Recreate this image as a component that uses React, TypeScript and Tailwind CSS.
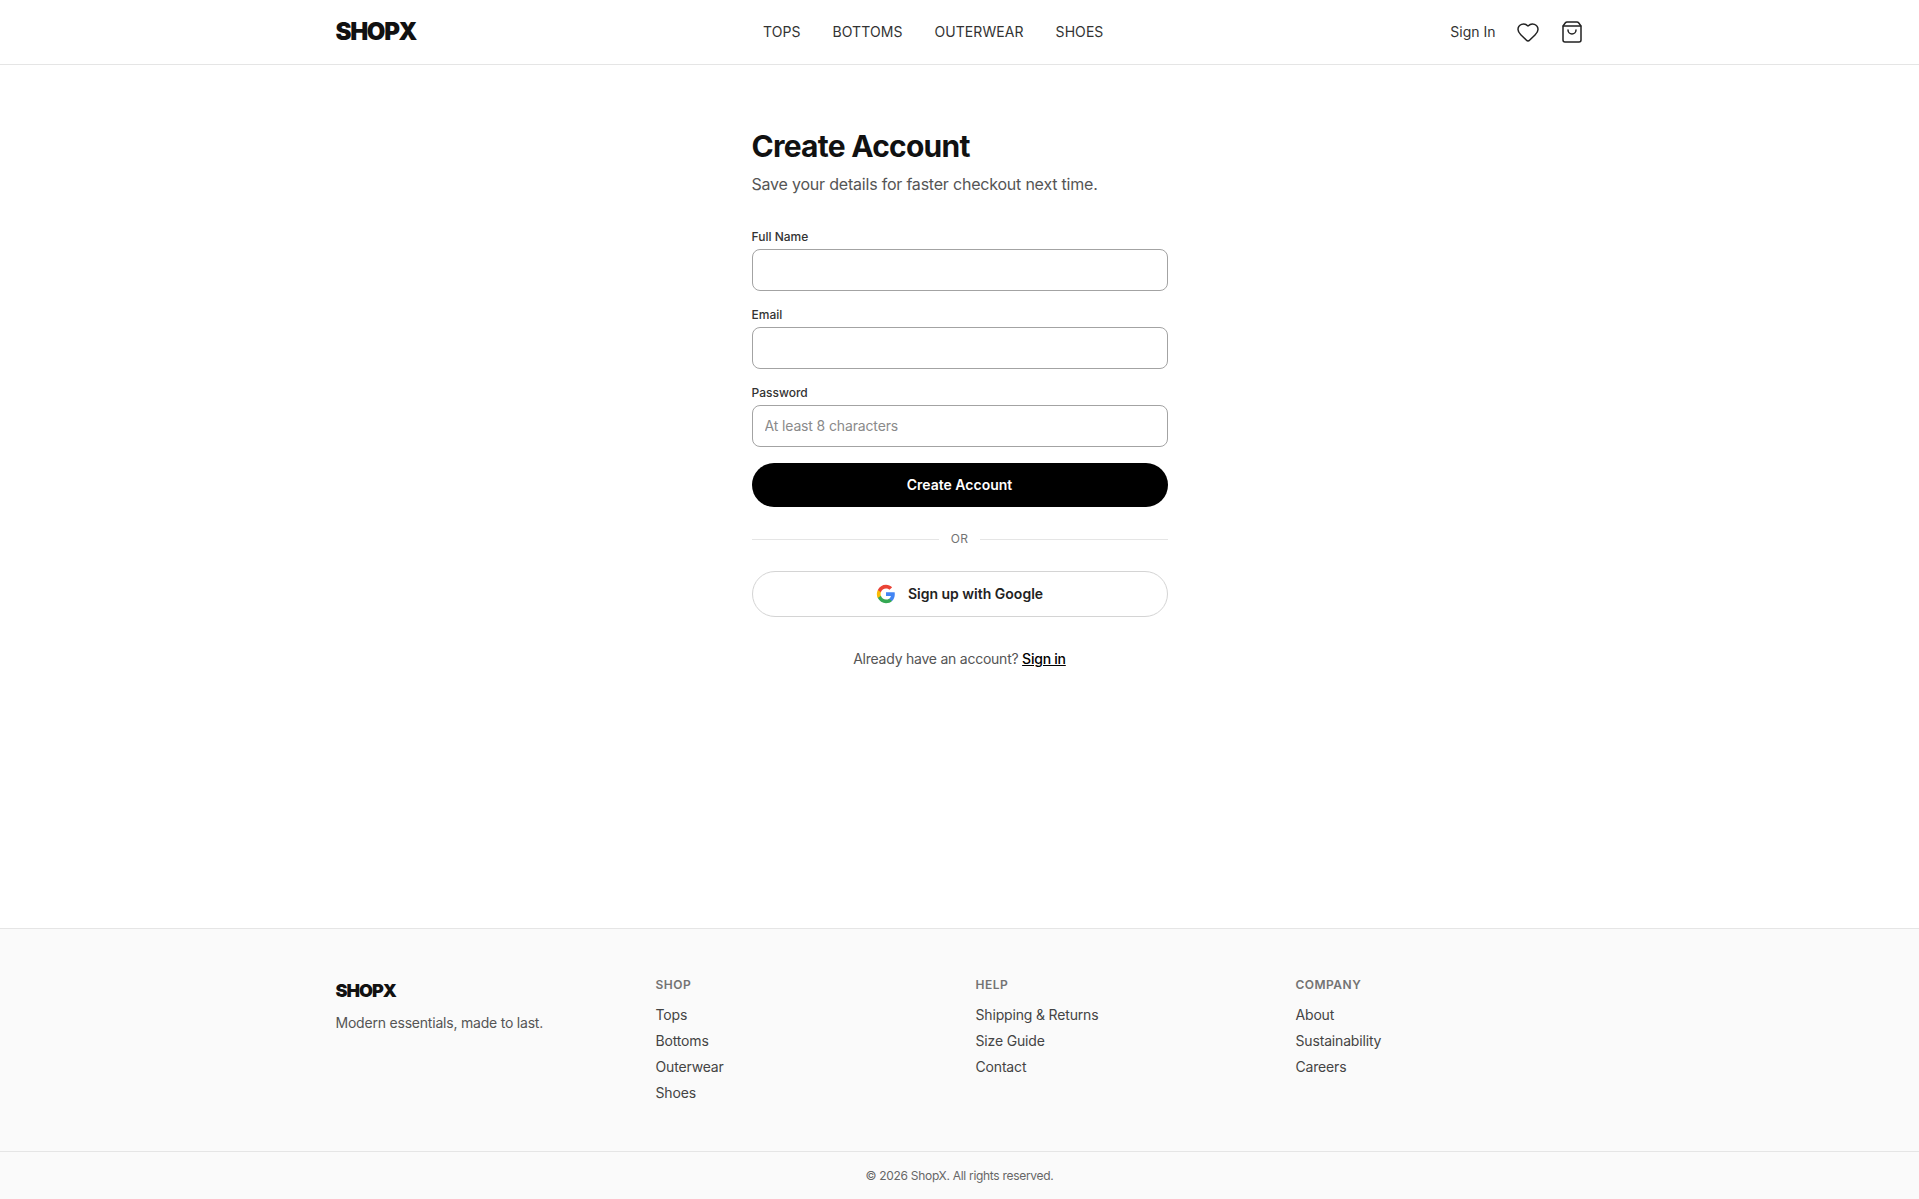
import { Heart, ShoppingBag } from "lucide-react";

const sans = "font-['Inter','Liberation_Sans',sans-serif]";

const NAV = ["TOPS", "BOTTOMS", "OUTERWEAR", "SHOES"];
const COLUMNS = [
  { title: "SHOP", links: ["Tops", "Bottoms", "Outerwear", "Shoes"] },
  { title: "HELP", links: ["Shipping & Returns", "Size Guide", "Contact"] },
  { title: "COMPANY", links: ["About", "Sustainability", "Careers"] },
];

function Field({ label, placeholder }: { label: string; placeholder?: string }) {
  return (
    <div className="mb-4 block">
      <label className="mb-1 block text-xs leading-4 font-medium text-[#333]">{label}</label>
      <input
        placeholder={placeholder}
        className="block h-[42px] w-full rounded-lg border border-[#a3a3a3] bg-white px-3 pb-px text-sm tracking-[-0.01em] text-[#111] outline-none placeholder:text-[#8a8a8a]"
      />
    </div>
  );
}

function GoogleIcon() {
  return (
    <svg width="20" height="20" viewBox="0 0 24 24">
      <path fill="#4285F4" d="M22.56 12.25c0-.78-.07-1.53-.2-2.25H12v4.26h5.92c-.26 1.37-1.04 2.53-2.21 3.31v2.77h3.57c2.08-1.92 3.28-4.74 3.28-8.09z" />
      <path fill="#34A853" d="M12 23c2.97 0 5.46-.98 7.28-2.66l-3.57-2.77c-.98.66-2.23 1.06-3.71 1.06-2.86 0-5.29-1.93-6.16-4.53H2.18v2.84C3.99 20.53 7.7 23 12 23z" />
      <path fill="#FBBC05" d="M5.84 14.09c-.22-.66-.35-1.36-.35-2.09s.13-1.43.35-2.09V7.07H2.18C1.43 8.55 1 10.22 1 12s.43 3.45 1.18 4.93l2.85-2.22.81-.62z" />
      <path fill="#EA4335" d="M12 5.38c1.62 0 3.06.56 4.21 1.64l3.15-3.15C17.45 2.09 14.97 1 12 1 7.7 1 3.99 3.47 2.18 7.07l3.66 2.84c.87-2.6 3.3-4.53 6.16-4.53z" />
    </svg>
  );
}

export default function App() {
  return (
    <div className={`${sans} flex min-h-screen flex-col bg-white text-[#111]`}>
      <header className="border-b border-[#e5e5e5]">
        <div className="mx-auto flex h-16 w-full max-w-7xl items-center justify-between px-4">
          <a className="text-2xl font-black tracking-[-0.055em] text-[#111]">SHOPX</a>
          <nav className="flex gap-8">
            {NAV.map((n) => (
              <a key={n} className="text-sm tracking-[0.005em] text-[#333]">{n}</a>
            ))}
          </nav>
          <div className="flex items-center gap-5">
            <a className="text-sm text-[#333]">Sign In</a>
            <Heart size={24} strokeWidth={1.5} className="text-[#222]" />
            <ShoppingBag size={24} strokeWidth={1.5} className="text-[#222]" />
          </div>
        </div>
      </header>

      <main className="flex-1 px-4 pt-[63px]">
        <div className="mx-auto w-[416px]">
          <h1 className="text-3xl leading-9 font-bold tracking-[-0.025em] text-[#111]">Create Account</h1>
          <p className="mt-2 text-base leading-6 tracking-[-0.013em] text-[#555]">Save your details for faster checkout next time.</p>
          <form className="mt-[33px]">
            <Field label="Full Name" />
            <Field label="Email" />
            <Field label="Password" placeholder="At least 8 characters" />
            <button type="button" className="h-11 w-full rounded-full bg-black text-sm font-semibold text-white">Create Account</button>
          </form>
          <div className="my-6 flex items-center gap-3">
            <div className="h-px flex-1 bg-[#e5e5e5]" />
            <span className="text-xs leading-4 tracking-[0.02em] text-[#737373]">OR</span>
            <div className="h-px flex-1 bg-[#e5e5e5]" />
          </div>
          <button type="button" className="flex h-[46px] w-full items-center justify-center gap-3 rounded-full border border-[#d4d4d4] bg-white text-sm font-semibold text-[#222]">
            <GoogleIcon />
            Sign up with Google
          </button>
          <p className="mt-8 text-center text-sm leading-5 tracking-[-0.017em] text-[#555]">
            Already have an account? <a className="font-medium text-black underline">Sign in</a>
          </p>
        </div>
      </main>

      <footer className="border-t border-[#e5e5e5] bg-[#fafafa]">
        <div className="mx-auto grid w-full max-w-7xl grid-cols-4 gap-8 px-4 pt-12 pb-12">
          <div>
            <div className="text-lg leading-7 font-black tracking-[-0.055em] text-[#111]">SHOPX</div>
            <p className="mt-2 text-sm leading-5 tracking-[-0.015em] text-[#555]">Modern essentials, made to last.</p>
          </div>
          {COLUMNS.map((c) => (
            <div key={c.title}>
              <h4 className="text-xs leading-4 font-semibold tracking-[0.04em] text-[#737373]">{c.title}</h4>
              <ul className="mt-3 flex flex-col gap-1.5">
                {c.links.map((l) => (
                  <li key={l} className="text-sm leading-5 tracking-[-0.012em] text-[#444]">{l}</li>
                ))}
              </ul>
            </div>
          ))}
        </div>
        <div className="flex h-12 items-center justify-center border-t border-[#e5e5e5] text-xs leading-4 tracking-[-0.025em] text-[#666]">
          © 2026 ShopX. All rights reserved.
        </div>
      </footer>
    </div>
  );
}
